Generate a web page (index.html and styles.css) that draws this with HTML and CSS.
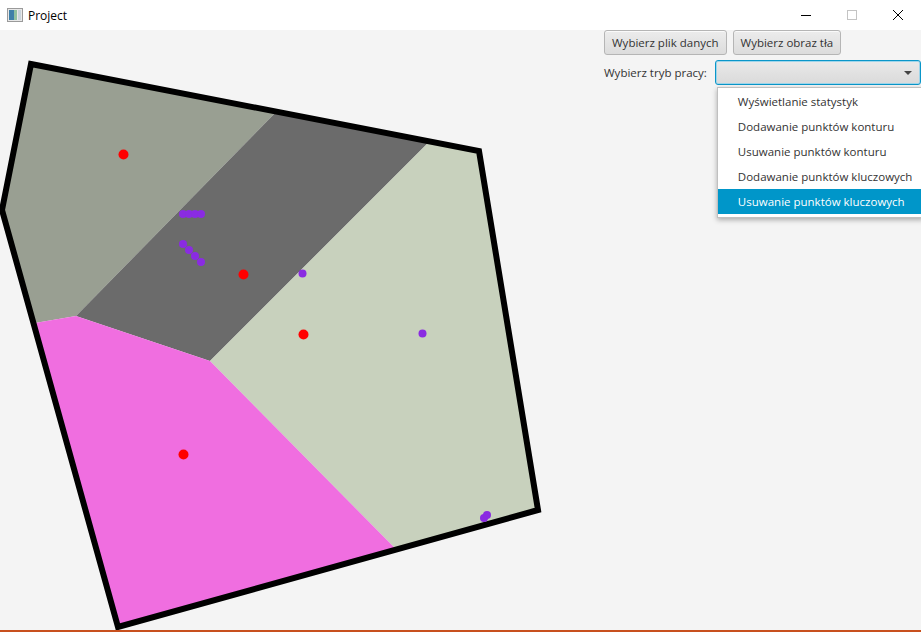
FILE: index.html
```html
<!DOCTYPE html>
<html lang="pl">
<head>
<meta charset="utf-8">
<title>Project</title>
<link rel="stylesheet" href="styles.css">
</head>
<body>
<div class="window">
  <header class="titlebar">
    <div class="title">
      <svg class="app-icon" width="16" height="14" viewBox="0 0 16 14">
        <rect x="0.5" y="0.5" width="15" height="13" fill="#e8e8e8" stroke="#9a9a9a"/>
        <rect x="2" y="2" width="5" height="10" fill="#3d7fa8"/>
        <rect x="7" y="2" width="3" height="10" fill="#8fc0a0"/>
        <rect x="11" y="2" width="3" height="10" fill="#c9d4dc"/>
      </svg>
      <span class="title-text">Project</span>
    </div>
    <div class="win-controls">
      <span class="wc"><svg width="12" height="12" viewBox="0 0 12 12"><path d="M1 6.5h10" stroke="#000" stroke-width="1"/></svg></span>
      <span class="wc"><svg width="12" height="12" viewBox="0 0 12 12"><rect x="1.5" y="1.5" width="9" height="9" fill="none" stroke="#c4c4c4"/></svg></span>
      <span class="wc"><svg width="12" height="12" viewBox="0 0 12 12"><path d="M1 1l10 10M11 1L1 11" stroke="#000" stroke-width="1"/></svg></span>
    </div>
  </header>
  <main class="content">
    <svg class="canvas" width="600" height="600" viewBox="0 30 600 600">
      <defs>
        <clipPath id="poly">
          <polygon points="31,64 479,151 538,510 118,627 2,210"/>
        </clipPath>
      </defs>
      <g clip-path="url(#poly)">
        <polygon points="0,0 386,0 76,316 35,323 0,329" fill="#999f92"/>
        <polygon points="386,0 571,0 210,361 76,316" fill="#6b6b6b"/>
        <polygon points="571,0 900,0 900,700 545,700 210,361" fill="#c8d1bd"/>
        <polygon points="0,329 35,323 76,316 210,361 545,700 0,700" fill="#f06ee0"/>
      </g>
      <polygon points="31,64 479,151 538,510 118,627 2,210" fill="none" stroke="#000" stroke-width="6" stroke-linejoin="miter"/>
      <g fill="#ff0000">
        <circle cx="123.5" cy="154.5" r="5"/>
        <circle cx="243.5" cy="274.5" r="5"/>
        <circle cx="303.5" cy="334.5" r="5"/>
        <circle cx="183.5" cy="454.5" r="5"/>
      </g>
      <g fill="#8a2be2">
        <circle cx="183" cy="214" r="4"/>
        <circle cx="189" cy="214" r="4"/>
        <circle cx="195" cy="214" r="4"/>
        <circle cx="201" cy="214" r="4"/>
        <circle cx="183" cy="244" r="4"/>
        <circle cx="189" cy="250" r="4"/>
        <circle cx="195" cy="256" r="4"/>
        <circle cx="201" cy="262" r="4"/>
        <circle cx="302.5" cy="273.5" r="4"/>
        <circle cx="422.5" cy="333.5" r="4"/>
        <circle cx="484" cy="518" r="4"/>
        <circle cx="487" cy="515" r="4"/>
      </g>
    </svg>
    <section class="controls">
      <div class="button-row">
        <button class="btn">Wybierz plik danych</button>
        <button class="btn">Wybierz obraz tła</button>
      </div>
      <div class="mode-row">
        <span class="label">Wybierz tryb pracy:</span>
        <div class="combo">
          <span class="arrow"></span>
          <ul class="popup">
            <li>Wyświetlanie statystyk</li>
            <li>Dodawanie punktów konturu</li>
            <li>Usuwanie punktów konturu</li>
            <li>Dodawanie punktów kluczowych</li>
            <li class="selected">Usuwanie punktów kluczowych</li>
          </ul>
        </div>
      </div>
    </section>
  </main>
  <div class="taskbar-edge"></div>
</div>
</body>
</html>
```
FILE: styles.css
```css
* { box-sizing: border-box; }
html, body { margin: 0; padding: 0; }
body {
  width: 921px;
  height: 632px;
  overflow: hidden;
  font-family: "Segoe UI", "Open Sans", "Noto Sans", sans-serif;
  font-size: 11.5px;
  color: #333;
  background: #f4f4f4;
}
.window { display: flex; flex-direction: column; height: 632px; }
.titlebar {
  height: 30px;
  background: #fff;
  display: flex;
  justify-content: space-between;
  align-items: center;
}
.title { display: flex; align-items: center; padding-left: 7px; gap: 5px; }
.app-icon { display: block; }
.title-text { color: #000; font-size: 12px; }
.win-controls { display: flex; height: 30px; }
.wc {
  width: 46px;
  height: 30px;
  display: flex;
  align-items: center;
  justify-content: center;
}
.content {
  height: 600px;
  display: flex;
  background: #f4f4f4;
}
.canvas { display: block; flex: none; }
.controls {
  flex: 1;
  padding: 0 0 0 4px;
  display: flex;
  flex-direction: column;
  gap: 5px;
}
.button-row { display: flex; gap: 6px; }
.btn {
  font: inherit;
  color: #333;
  height: 25px;
  padding: 0 7px;
  border: 1px solid #b5b5b5;
  border-radius: 3px;
  background: linear-gradient(#ececec, #dcdcdc);
  box-shadow: inset 0 1px 0 #fafafa;
}
.mode-row { display: flex; align-items: center; gap: 8px; }
.label { color: #333; }
.combo {
  position: relative;
  flex: 1;
  height: 25px;
  border: 1px solid #0a96c9;
  border-radius: 3px;
  background: linear-gradient(#e9e9e9, #dadada);
  box-shadow: 0 0 0 1px #9fd5ea inset;
}
.arrow {
  position: absolute;
  right: 8px;
  top: 10px;
  border-left: 4px solid transparent;
  border-right: 4px solid transparent;
  border-top: 4px solid #444;
}
.popup {
  position: absolute;
  left: 1px;
  right: -4px;
  top: 26px;
  margin: 0;
  padding: 1px 0 3px;
  list-style: none;
  background: #fff;
  border: 1px solid #c0c0c0;
  box-shadow: 0 2px 5px rgba(0,0,0,0.3);
  z-index: 2;
}
.popup li {
  height: 25px;
  line-height: 25px;
  padding-left: 20px;
  color: #333;
  white-space: nowrap;
}
.popup li.selected { background: #0096c9; color: #fff; }
.taskbar-edge { height: 2px; background: #c8501e; }
```
